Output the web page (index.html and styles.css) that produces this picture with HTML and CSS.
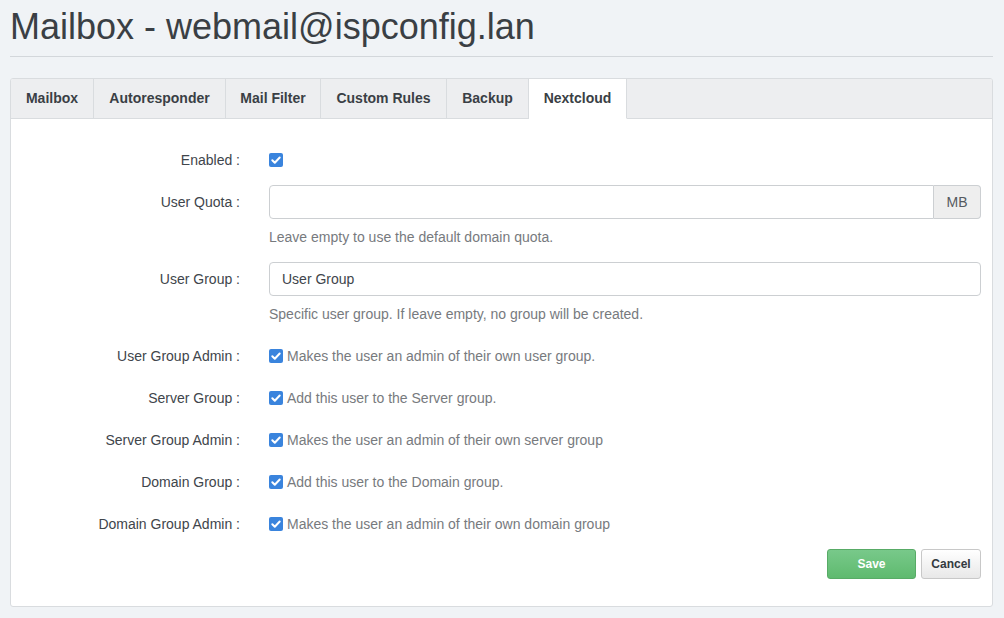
FILE: index.html
```html
<!DOCTYPE html>
<html>
<head>
<meta charset="utf-8">
<link rel="stylesheet" href="styles.css">
</head>
<body>
<h1 class="page-title">Mailbox - webmail@ispconfig.lan</h1>
<div class="panel">
  <ul class="tabs">
    <li class="tab">Mailbox</li>
    <li class="tab">Autoresponder</li>
    <li class="tab">Mail Filter</li>
    <li class="tab">Custom Rules</li>
    <li class="tab">Backup</li>
    <li class="tab active">Nextcloud</li>
  </ul>
  <form class="form">
    <div class="row row-check first">
      <label class="label">Enabled :</label>
      <div class="control"><span class="cb"><svg viewBox="0 0 14 14" width="14" height="14"><path d="M3.3 7.2l2.5 2.5 4.9-5.2" fill="none" stroke="#fff" stroke-width="2" stroke-linecap="round" stroke-linejoin="round"/></svg></span></div>
    </div>
    <div class="row row-input">
      <label class="label">User Quota :</label>
      <div class="control">
        <div class="input-group"><input class="input grouped" type="text"><span class="addon">MB</span></div>
        <p class="help">Leave empty to use the default domain quota.</p>
      </div>
    </div>
    <div class="row row-input">
      <label class="label">User Group :</label>
      <div class="control">
        <input class="input" type="text" value="User Group">
        <p class="help">Specific user group. If leave empty, no group will be created.</p>
      </div>
    </div>
    <div class="row row-check">
      <label class="label">User Group Admin :</label>
      <div class="control"><span class="cb"><svg viewBox="0 0 14 14" width="14" height="14"><path d="M3.3 7.2l2.5 2.5 4.9-5.2" fill="none" stroke="#fff" stroke-width="2" stroke-linecap="round" stroke-linejoin="round"/></svg></span><span class="desc">Makes the user an admin of their own user group.</span></div>
    </div>
    <div class="row row-check">
      <label class="label">Server Group :</label>
      <div class="control"><span class="cb"><svg viewBox="0 0 14 14" width="14" height="14"><path d="M3.3 7.2l2.5 2.5 4.9-5.2" fill="none" stroke="#fff" stroke-width="2" stroke-linecap="round" stroke-linejoin="round"/></svg></span><span class="desc">Add this user to the Server group.</span></div>
    </div>
    <div class="row row-check">
      <label class="label">Server Group Admin :</label>
      <div class="control"><span class="cb"><svg viewBox="0 0 14 14" width="14" height="14"><path d="M3.3 7.2l2.5 2.5 4.9-5.2" fill="none" stroke="#fff" stroke-width="2" stroke-linecap="round" stroke-linejoin="round"/></svg></span><span class="desc">Makes the user an admin of their own server group</span></div>
    </div>
    <div class="row row-check">
      <label class="label">Domain Group :</label>
      <div class="control"><span class="cb"><svg viewBox="0 0 14 14" width="14" height="14"><path d="M3.3 7.2l2.5 2.5 4.9-5.2" fill="none" stroke="#fff" stroke-width="2" stroke-linecap="round" stroke-linejoin="round"/></svg></span><span class="desc">Add this user to the Domain group.</span></div>
    </div>
    <div class="row row-check">
      <label class="label">Domain Group Admin :</label>
      <div class="control"><span class="cb"><svg viewBox="0 0 14 14" width="14" height="14"><path d="M3.3 7.2l2.5 2.5 4.9-5.2" fill="none" stroke="#fff" stroke-width="2" stroke-linecap="round" stroke-linejoin="round"/></svg></span><span class="desc">Makes the user an admin of their own domain group</span></div>
    </div>
    <div class="actions">
      <button type="button" class="btn btn-save">Save</button>
      <button type="button" class="btn btn-cancel">Cancel</button>
    </div>
  </form>
</div>
</body>
</html>
```
FILE: styles.css
```css
* { box-sizing: border-box; }
html, body { margin: 0; padding: 0; }
body {
  background: #f0f3f6;
  font-family: "Liberation Sans", Arial, Helvetica, sans-serif;
  font-size: 14px;
  color: #3b4046;
  padding: 0 11px 0 10px;
  height: 618px;
  overflow: hidden;
}
.page-title {
  margin: 0;
  padding-top: 6px;
  height: 57px;
  font-size: 36px;
  font-weight: 400;
  line-height: 42px;
  color: #3a3f44;
  border-bottom: 1px solid #d3d7db;
}
.panel {
  margin-top: 21px;
  background: #fff;
  border: 1px solid #d9dcdf;
  border-radius: 3px;
  overflow: hidden;
}
.tabs {
  list-style: none;
  margin: 0;
  padding: 0;
  display: flex;
  height: 40px;
  background: #edeef0;
  border-bottom: 1px solid #d9dcdf;
}
.tab {
  height: 40px;
  line-height: 39px;
  padding: 0;
  text-align: center;
  font-weight: 700;
  font-size: 14px;
  color: #3a3f45;
  border-right: 1px solid #d9dcdf;
}
.tab:nth-child(1) { width: 83px; }
.tab:nth-child(2) { width: 132px; }
.tab:nth-child(3) { width: 95px; }
.tab:nth-child(4) { width: 126px; }
.tab:nth-child(5) { width: 82px; }
.tab:nth-child(6) { width: 98px; }
.tab.active {
  background: #fff;
  height: 40px;
  border-bottom: 1px solid #fff;
}
.form {
  padding: 24px 11px 27px 0;
}
.row {
  display: grid;
  grid-template-columns: 229px 1fr;
  column-gap: 29px;
}
.label {
  text-align: right;
  color: #40454b;
  font-size: 14px;
  line-height: 20px;
}
.row-check {
  height: 34px;
  align-items: center;
  margin-bottom: 8px;
}
.row-input { margin-bottom: 15px; }
.row-input .label { padding-top: 7px; }
.control { display: flex; flex-direction: column; }
.row-check .control { flex-direction: row; align-items: center; }
.cb {
  width: 14px;
  height: 14px;
  border-radius: 2px;
  background: #3a84dd;
  display: inline-flex;
  flex: none;
}
.cb svg { display: block; }
.desc {
  margin-left: 4px;
  color: #777a7e;
  font-size: 14px;
  line-height: 20px;
}
.input-group { display: flex; }
.input {
  height: 34px;
  width: 100%;
  border: 1px solid #cccfd2;
  border-radius: 4px;
  padding: 6px 12px;
  font-family: "Liberation Sans", Arial, Helvetica, sans-serif;
  font-size: 14px;
  color: #40454b;
  background: #fff;
  outline: none;
}
.input.grouped {
  border-top-right-radius: 0;
  border-bottom-right-radius: 0;
}
.addon {
  flex: none;
  width: 47px;
  height: 34px;
  border: 1px solid #cccfd2;
  border-left: none;
  border-radius: 0 4px 4px 0;
  background: #eeeeee;
  color: #555a5f;
  text-align: center;
  line-height: 32px;
  font-size: 14px;
}
.help {
  margin: 8px 0 0;
  color: #777a7e;
  font-size: 14px;
  line-height: 20px;
}
.actions {
  display: flex;
  justify-content: flex-end;
  gap: 5px;
  margin-top: 8px;
}
.btn {
  height: 30px;
  font-family: "Liberation Sans", Arial, Helvetica, sans-serif;
  font-size: 12px;
  font-weight: 700;
  border-radius: 3px;
  padding: 0;
  cursor: pointer;
}
.btn-save {
  width: 89px;
  color: #fff;
  background: linear-gradient(#78c98a, #5fba6f);
  border: 1px solid #58ab66;
}
.btn-cancel {
  width: 60px;
  color: #333a40;
  background: linear-gradient(#ffffff, #e8e8e8);
  border: 1px solid #c8c8c8;
}
```
